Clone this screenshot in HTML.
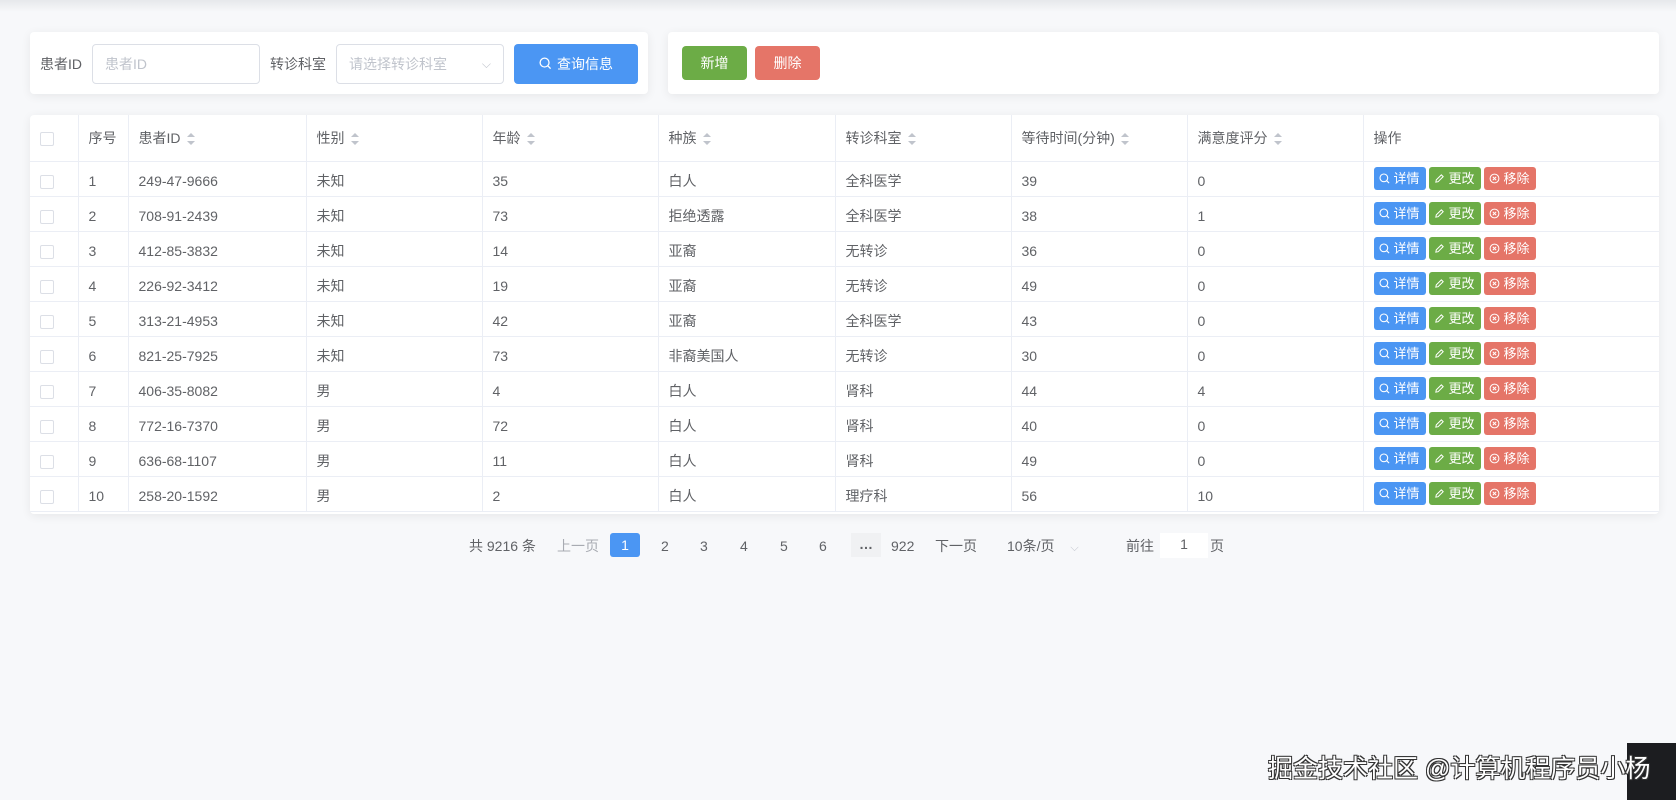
<!DOCTYPE html>
<html><head><meta charset="utf-8"><style>
*{box-sizing:border-box;margin:0;padding:0}
body{width:1676px;height:800px;background:#f7f8fa;font-family:"Liberation Sans","Noto Sans CJK SC",sans-serif;color:#606266;font-size:14px;position:relative;overflow:hidden}
.top{position:absolute;left:0;top:0;width:1676px;height:12px;background:linear-gradient(#e6e8eb,#f7f8fa)}
.card{position:absolute;background:#fff;border-radius:4px;box-shadow:0 2px 10px rgba(0,0,0,.07)}
.abs{position:absolute}
.inp{position:absolute;border:1px solid #dcdfe6;border-radius:4px;background:#fff;color:#c0c4cc;font-size:14px;padding-left:12px;line-height:39px}
.btn{position:absolute;color:#fff;border-radius:4px;text-align:center;font-size:14px}
table{border-collapse:collapse;width:1629px;table-layout:fixed}
td,th{border-bottom:1px solid #ebeef5;border-right:1px solid #ebeef5;text-align:left;padding-left:10px;font-weight:normal;height:35px;font-size:14px;color:#606266}
td{padding-top:4px}
th{height:46px}
tr td:last-child,tr th:last-child{border-right:none}
td.ops{padding-top:0}
.cb{display:inline-block;width:14px;height:14px;border:1px solid #dcdfe6;border-radius:2px;vertical-align:middle}
.sort{display:inline-block;vertical-align:middle;margin-left:6px;width:8px;height:12px;position:relative}
.sort:before{content:"";position:absolute;left:0;top:0;border:4px solid transparent;border-bottom-color:#c0c4cc;border-top:none}
.sort:after{content:"";position:absolute;left:0;bottom:0;border:4px solid transparent;border-top-color:#c0c4cc;border-bottom:none}
.ab{display:inline-block;width:52px;height:23px;border-radius:3px;color:#fff;font-size:13px;line-height:23px;text-align:center;margin-right:3px;vertical-align:middle}
.ab svg{vertical-align:-1px;margin-right:3px}
.pg{position:absolute;top:535px;font-size:14px;color:#606266;line-height:22px}
</style></head><body>
<div class="top"></div>
<div class="card" style="left:30px;top:32px;width:618px;height:62px"></div>
<div class="abs" style="left:40px;top:54px">患者ID</div>
<div class="inp" style="left:92px;top:44px;width:168px;height:40px">患者ID</div>
<div class="abs" style="left:270px;top:54px">转诊科室</div>
<div class="inp" style="left:336px;top:44px;width:168px;height:40px">请选择转诊科室<span style="position:absolute;right:12px;top:0;font-size:12px">⌵</span></div>
<div class="btn" style="left:514px;top:44px;width:124px;height:40px;line-height:40px;background:#4b96f3">
<svg width="13" height="13" viewBox="0 0 14 14" style="vertical-align:-1px;margin-right:5px"><circle cx="6" cy="6" r="4.8" fill="none" stroke="#fff" stroke-width="1.4"/><path d="M9.5 9.5L12.5 12.5" stroke="#fff" stroke-width="1.4"/></svg>查询信息</div>
<div class="card" style="left:668px;top:32px;width:991px;height:62px"></div>
<div class="btn" style="left:682px;top:46px;width:65px;height:34px;line-height:34px;background:#6cac46">新增</div>
<div class="btn" style="left:755px;top:46px;width:65px;height:34px;line-height:34px;background:#e57568">删除</div>
<div class="card" style="left:30px;top:115px;width:1629px;height:399px;overflow:hidden">
<table>
<colgroup><col style="width:48px"><col style="width:50px"><col style="width:178px"><col style="width:176px"><col style="width:176px"><col style="width:177px"><col style="width:176px"><col style="width:176px"><col style="width:176px"><col></colgroup>
<tr><th><span class="cb"></span></th><th>序号</th><th>患者ID<span class="sort"></span></th><th>性别<span class="sort"></span></th><th>年龄<span class="sort"></span></th><th>种族<span class="sort"></span></th><th>转诊科室<span class="sort"></span></th><th>等待时间(分钟)<span class="sort"></span></th><th>满意度评分<span class="sort"></span></th><th>操作</th></tr>
<tr><td><span class="cb"></span></td><td>1</td><td>249-47-9666</td><td>未知</td><td>35</td><td>白人</td><td>全科医学</td><td>39</td><td>0</td><td class="ops"></td></tr>
<tr><td><span class="cb"></span></td><td>2</td><td>708-91-2439</td><td>未知</td><td>73</td><td>拒绝透露</td><td>全科医学</td><td>38</td><td>1</td><td class="ops"></td></tr>
<tr><td><span class="cb"></span></td><td>3</td><td>412-85-3832</td><td>未知</td><td>14</td><td>亚裔</td><td>无转诊</td><td>36</td><td>0</td><td class="ops"></td></tr>
<tr><td><span class="cb"></span></td><td>4</td><td>226-92-3412</td><td>未知</td><td>19</td><td>亚裔</td><td>无转诊</td><td>49</td><td>0</td><td class="ops"></td></tr>
<tr><td><span class="cb"></span></td><td>5</td><td>313-21-4953</td><td>未知</td><td>42</td><td>亚裔</td><td>全科医学</td><td>43</td><td>0</td><td class="ops"></td></tr>
<tr><td><span class="cb"></span></td><td>6</td><td>821-25-7925</td><td>未知</td><td>73</td><td>非裔美国人</td><td>无转诊</td><td>30</td><td>0</td><td class="ops"></td></tr>
<tr><td><span class="cb"></span></td><td>7</td><td>406-35-8082</td><td>男</td><td>4</td><td>白人</td><td>肾科</td><td>44</td><td>4</td><td class="ops"></td></tr>
<tr><td><span class="cb"></span></td><td>8</td><td>772-16-7370</td><td>男</td><td>72</td><td>白人</td><td>肾科</td><td>40</td><td>0</td><td class="ops"></td></tr>
<tr><td><span class="cb"></span></td><td>9</td><td>636-68-1107</td><td>男</td><td>11</td><td>白人</td><td>肾科</td><td>49</td><td>0</td><td class="ops"></td></tr>
<tr><td><span class="cb"></span></td><td>10</td><td>258-20-1592</td><td>男</td><td>2</td><td>白人</td><td>理疗科</td><td>56</td><td>10</td><td class="ops"></td></tr>
</table></div>
<script>
var s='<svg width="11" height="11" viewBox="0 0 12 12"><circle cx="5.3" cy="5.3" r="4.2" fill="none" stroke="#fff" stroke-width="1.2"/><path d="M8.4 8.4L11 11" stroke="#fff" stroke-width="1.2"/></svg>';
var e='<svg width="11" height="11" viewBox="0 0 12 12"><path d="M2 10L2.5 7.5L8 2L10 4L4.5 9.5Z" fill="none" stroke="#fff" stroke-width="1.1"/></svg>';
var x='<svg width="11" height="11" viewBox="0 0 12 12"><circle cx="6" cy="6" r="4.8" fill="none" stroke="#fff" stroke-width="1.1"/><path d="M4.2 4.2L7.8 7.8M7.8 4.2L4.2 7.8" stroke="#fff" stroke-width="1.1"/></svg>';
document.querySelectorAll('.ops').forEach(function(t){t.innerHTML='<span class="ab" style="background:#4b96f3">'+s+'详情</span><span class="ab" style="background:#6cac46">'+e+'更改</span><span class="ab" style="background:#e57568">'+x+'移除</span>';});
</script>
<div class="pg" style="left:469px">共 9216 条</div>
<div class="pg" style="left:557px;color:#a8abb2">上一页</div>
<div class="pg" style="left:610px;top:533px;width:30px;height:24px;background:#4b96f3;color:#fff;text-align:center;border-radius:3px;line-height:24px">1</div>
<div class="pg" style="left:661px">2</div>
<div class="pg" style="left:700px">3</div>
<div class="pg" style="left:740px">4</div>
<div class="pg" style="left:780px">5</div>
<div class="pg" style="left:819px">6</div>
<div class="pg" style="left:851px;top:533px;width:30px;height:24px;background:#f0f1f3;text-align:center;font-weight:bold">…</div>
<div class="pg" style="left:891px">922</div>
<div class="pg" style="left:935px">下一页</div>
<div class="pg" style="left:1007px">10条/页 <span style="color:#c0c4cc;margin-left:12px;font-size:11px">⌵</span></div>
<div class="pg" style="left:1126px">前往</div>
<div class="pg" style="left:1160px;top:533px;width:48px;height:25px;background:#fff;text-align:center">1</div>
<div class="pg" style="left:1210px">页</div>
<div class="abs" style="left:1627px;top:743px;width:49px;height:57px;background:#1c1d20"></div>
<div class="abs" style="left:1268px;top:749px;font-size:25px;color:#fff;text-shadow:1px 1px 0 #333,-1px -1px 0 #333,1px -1px 0 #333,-1px 1px 0 #333;white-space:nowrap">掘金技术社区 @计算机程序员小杨</div>
</body></html>
